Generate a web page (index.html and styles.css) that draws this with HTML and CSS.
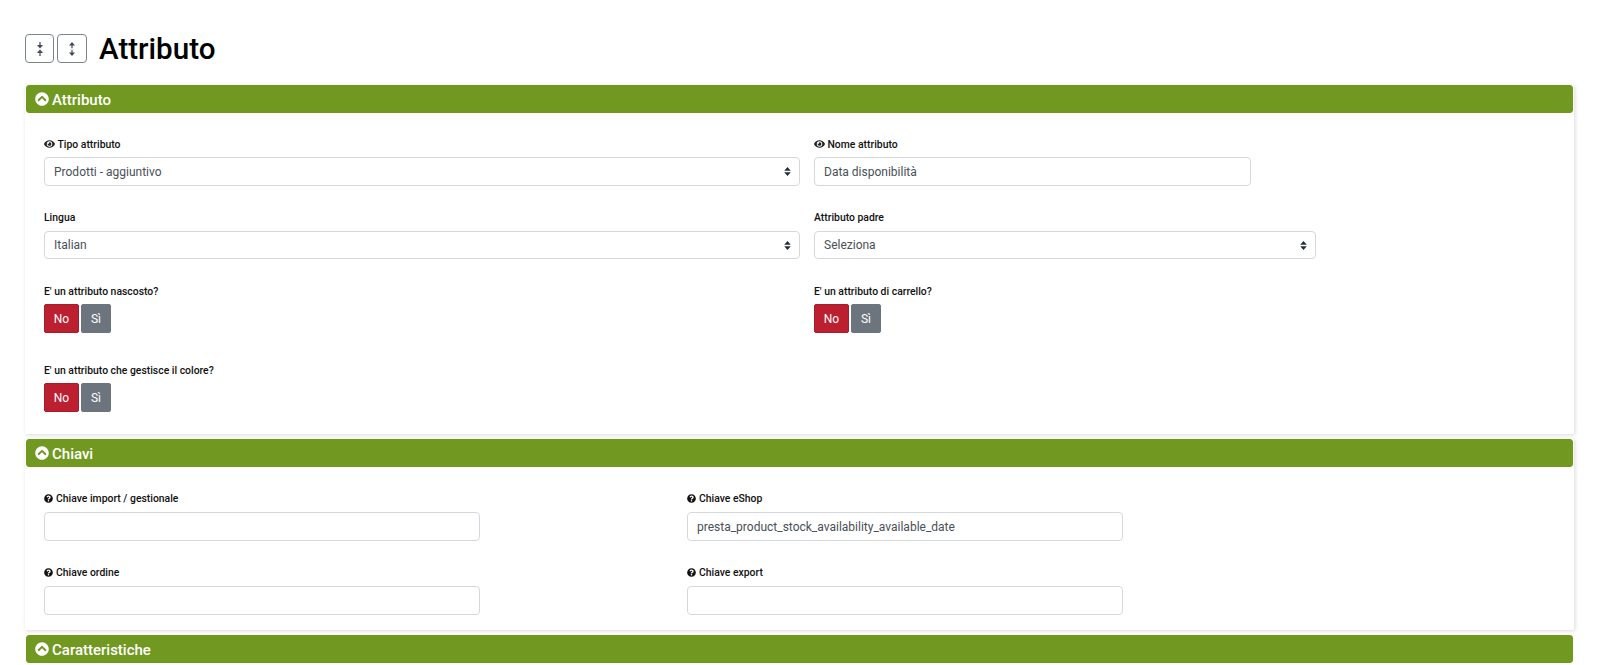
FILE: index.html
```html
<!DOCTYPE html>
<html lang="it">
<head>
<meta charset="utf-8">
<title>Attributo</title>
<link rel="stylesheet" href="styles.css">
</head>
<body>
<svg class="defs" width="0" height="0" aria-hidden="true">
  <symbol id="chev" viewBox="0 0 512 512"><path fill="#fff" d="M8 256C8 119 119 8 256 8s248 111 248 248-111 248-248 248S8 393 8 256zm231-113.900L103.500 277.600c-9.400 9.400-9.400 24.600 0 33.900l17 17c9.400 9.400 24.600 9.400 33.900 0L256 226.900l101.600 101.600c9.400 9.400 24.600 9.400 33.900 0l17-17c9.400-9.400 9.400-24.600 0-33.900L273 142.100c-9.400-9.400-24.600-9.400-34 0z"/></symbol>
  <symbol id="eye" viewBox="0 0 576 512"><path fill="#222" d="M572.520 241.400C518.290 135.590 410.930 64 288 64S57.680 135.640 3.480 241.410a32.350 32.350 0 0 0 0 29.190C57.710 376.410 165.070 448 288 448s230.320-71.640 284.520-177.410a32.350 32.350 0 0 0 0-29.190zM288 400a144 144 0 1 1 144-144 143.930 143.930 0 0 1-144 144zm0-240a95.310 95.310 0 0 0-25.310 3.790 47.850 47.850 0 0 1-66.900 66.900A95.780 95.780 0 1 0 288 160z"/></symbol>
  <symbol id="help" viewBox="0 0 512 512"><path fill="#111" d="M504 256c0 136.997-111.043 248-248 248S8 392.997 8 256C8 119.083 119.043 8 256 8s248 111.083 248 248zM262.655 90c-54.497 0-89.255 22.957-116.549 63.758-3.536 5.286-2.353 12.415 2.715 16.258l34.699 26.310c5.205 3.947 12.621 3.008 16.665-2.122 17.864-22.658 30.113-35.797 57.303-35.797 20.429 0 45.698 13.148 45.698 32.958 0 14.976-12.363 22.667-32.534 33.976C247.128 238.528 216 254.941 216 296v4c0 6.627 5.373 12 12 12h56c6.627 0 12-5.373 12-12v-1.333c0-28.462 83.186-29.647 83.186-106.667 0-58.002-60.165-102-116.531-102zM256 338c-25.365 0-46 20.635-46 46 0 25.364 20.635 46 46 46s46-20.636 46-46c0-25.365-20.635-46-46-46z"/></symbol>
  <symbol id="sort" viewBox="0 0 10 13"><path fill="#222e38" d="M5 0 9.700 5.400H.3zM5 13 .3 7.600h9.400z"/></symbol>
</svg>

<main class="page">
  <header class="title-row">
    <button class="tool tool-a" type="button" aria-label="Comprimi">
      <svg width="6" height="14" viewBox="0 0 6 14"><path fill="#3f4a57" d="M2.400 0h1.200v3H6L3 6.500 0 3h2.400zM3 7.500 6 11H3.600v3H2.400v-3H0z"/></svg>
    </button>
    <button class="tool tool-b" type="button" aria-label="Espandi">
      <svg width="6" height="14" viewBox="0 0 6 14"><path fill="#3f4a57" d="M3 0l3 3.500H3.600v2.800H2.400V3.500H0zM2.400 7.700h1.200v2.800H6L3 14l-3-3.500h2.400z"/></svg>
    </button>
    <h1>Attributo</h1>
  </header>

  <section class="panel">
    <h2 class="panel-head"><svg class="chev"><use href="#chev"/></svg>Attributo</h2>
    <div class="panel-body grid-main">
      <div class="field">
        <label><svg class="i-eye"><use href="#eye"/></svg>Tipo attributo</label>
        <div class="control select w-left">Prodotti - aggiuntivo<svg class="sort"><use href="#sort"/></svg></div>
      </div>
      <div class="field">
        <label><svg class="i-eye"><use href="#eye"/></svg>Nome attributo</label>
        <div class="control w-input">Data disponibilità</div>
      </div>
      <div class="field">
        <label>Lingua</label>
        <div class="control select w-left">Italian<svg class="sort"><use href="#sort"/></svg></div>
      </div>
      <div class="field">
        <label>Attributo padre</label>
        <div class="control select w-parent">Seleziona<svg class="sort"><use href="#sort"/></svg></div>
      </div>
      <div class="field">
        <label>E' un attributo nascosto?</label>
        <div class="toggle"><span class="no">No</span><span class="si">Sì</span></div>
      </div>
      <div class="field">
        <label>E' un attributo di carrello?</label>
        <div class="toggle"><span class="no">No</span><span class="si">Sì</span></div>
      </div>
      <div class="field">
        <label>E' un attributo che gestisce il colore?</label>
        <div class="toggle"><span class="no">No</span><span class="si">Sì</span></div>
      </div>
    </div>
  </section>

  <section class="panel">
    <h2 class="panel-head"><svg class="chev"><use href="#chev"/></svg>Chiavi</h2>
    <div class="panel-body grid-keys">
      <div class="field">
        <label><svg class="i-help"><use href="#help"/></svg>Chiave import / gestionale</label>
        <div class="control w-key"></div>
      </div>
      <div class="field">
        <label><svg class="i-help"><use href="#help"/></svg>Chiave eShop</label>
        <div class="control w-key">presta_product_stock_availability_available_date</div>
      </div>
      <div class="field">
        <label><svg class="i-help"><use href="#help"/></svg>Chiave ordine</label>
        <div class="control w-key"></div>
      </div>
      <div class="field">
        <label><svg class="i-help"><use href="#help"/></svg>Chiave export</label>
        <div class="control w-key"></div>
      </div>
    </div>
  </section>

  <section class="panel last">
    <h2 class="panel-head"><svg class="chev"><use href="#chev"/></svg>Caratteristiche</h2>
  </section>
</main>
</body>
</html>
```
FILE: styles.css
```css
* { box-sizing: border-box; }
html, body { margin: 0; height: 665px; overflow: hidden; background: #fff; }
body { font-family: Roboto, "Liberation Sans", sans-serif; color: #000; }
.defs { position: absolute; }
.page { padding: 34px 25px 0 25px; }
.title-row { display: flex; align-items: center; height: 29px; margin-bottom: 22px; }
.tool {
  height: 29px; padding: 0;
  display: flex; align-items: center; justify-content: center;
  background: #fff; border: 1px solid #7d858c; border-radius: 4px;
}
.tool-a { width: 29px; margin-right: 3px; }
.tool-b { width: 30px; }
h1 { margin: 2px 0 0 12px; font-size: 29.6px; font-weight: 500; line-height: 29px; }
.panel { margin-bottom: 5px; box-shadow: 1px 1px 4px rgba(0,0,0,.15); width: 1549px; }
.panel.last { box-shadow: none; }
.panel-head {
  margin: 0 0 0 1px; height: 28px; width: 1547px;
  display: flex; align-items: center; padding: 1px 0 0 8px;
  background: #719821; border: 1px solid #6f9a15; border-radius: 3px;
  color: #fff; font-size: 15px; font-weight: 500;
}
.chev { width: 14px; height: 14px; margin: -1px 3px 0 0; }
.panel-body { display: grid; row-gap: 25px; }
.grid-main { grid-template-columns: 770px 1fr; padding: 24px 0 17.500px 19px; }
.grid-keys { grid-template-columns: 643px 1fr; padding: 24px 0 15.500px 19px; }
.field { min-width: 0; display: flex; flex-direction: column; }
label {
  display: flex; align-items: center; height: 14px; margin-bottom: 6px;
  font-size: 10.4px; font-weight: 500; color: #111;
}
.grid-keys label { margin-bottom: 7px; }
.grid-keys { row-gap: 24px; }
.i-eye { width: 11px; height: 10px; margin-right: 2.500px; }
.i-help { width: 9px; height: 9px; margin-right: 3px; }
.control {
  height: 28.600px; display: flex; align-items: center; padding: 1px 9px 0;
  background: #fff; border: 1px solid #d5d9dd; border-radius: 4px;
  font-size: 12px; color: #495057;
}
.select { justify-content: space-between; padding-right: 8px; }
.sort { width: 7px; height: 9px; }
.w-left { width: 756px; }
.w-input { width: 437px; }
.w-key { width: 436px; }
.w-parent { width: 502px; }
.toggle { display: flex; gap: 2px; height: 29px; margin-bottom: 4.900px; }
.toggle span {
  display: flex; align-items: center; justify-content: center;
  height: 29px; color: #fff; font-size: 12px; font-weight: 400; border-radius: 2px;
}
.no { width: 35px; background: #bc1f30; border: 1px solid #a71d2a; }
.si { width: 30px; background: #6c757d; border: 1px solid #6c757d; }
```
